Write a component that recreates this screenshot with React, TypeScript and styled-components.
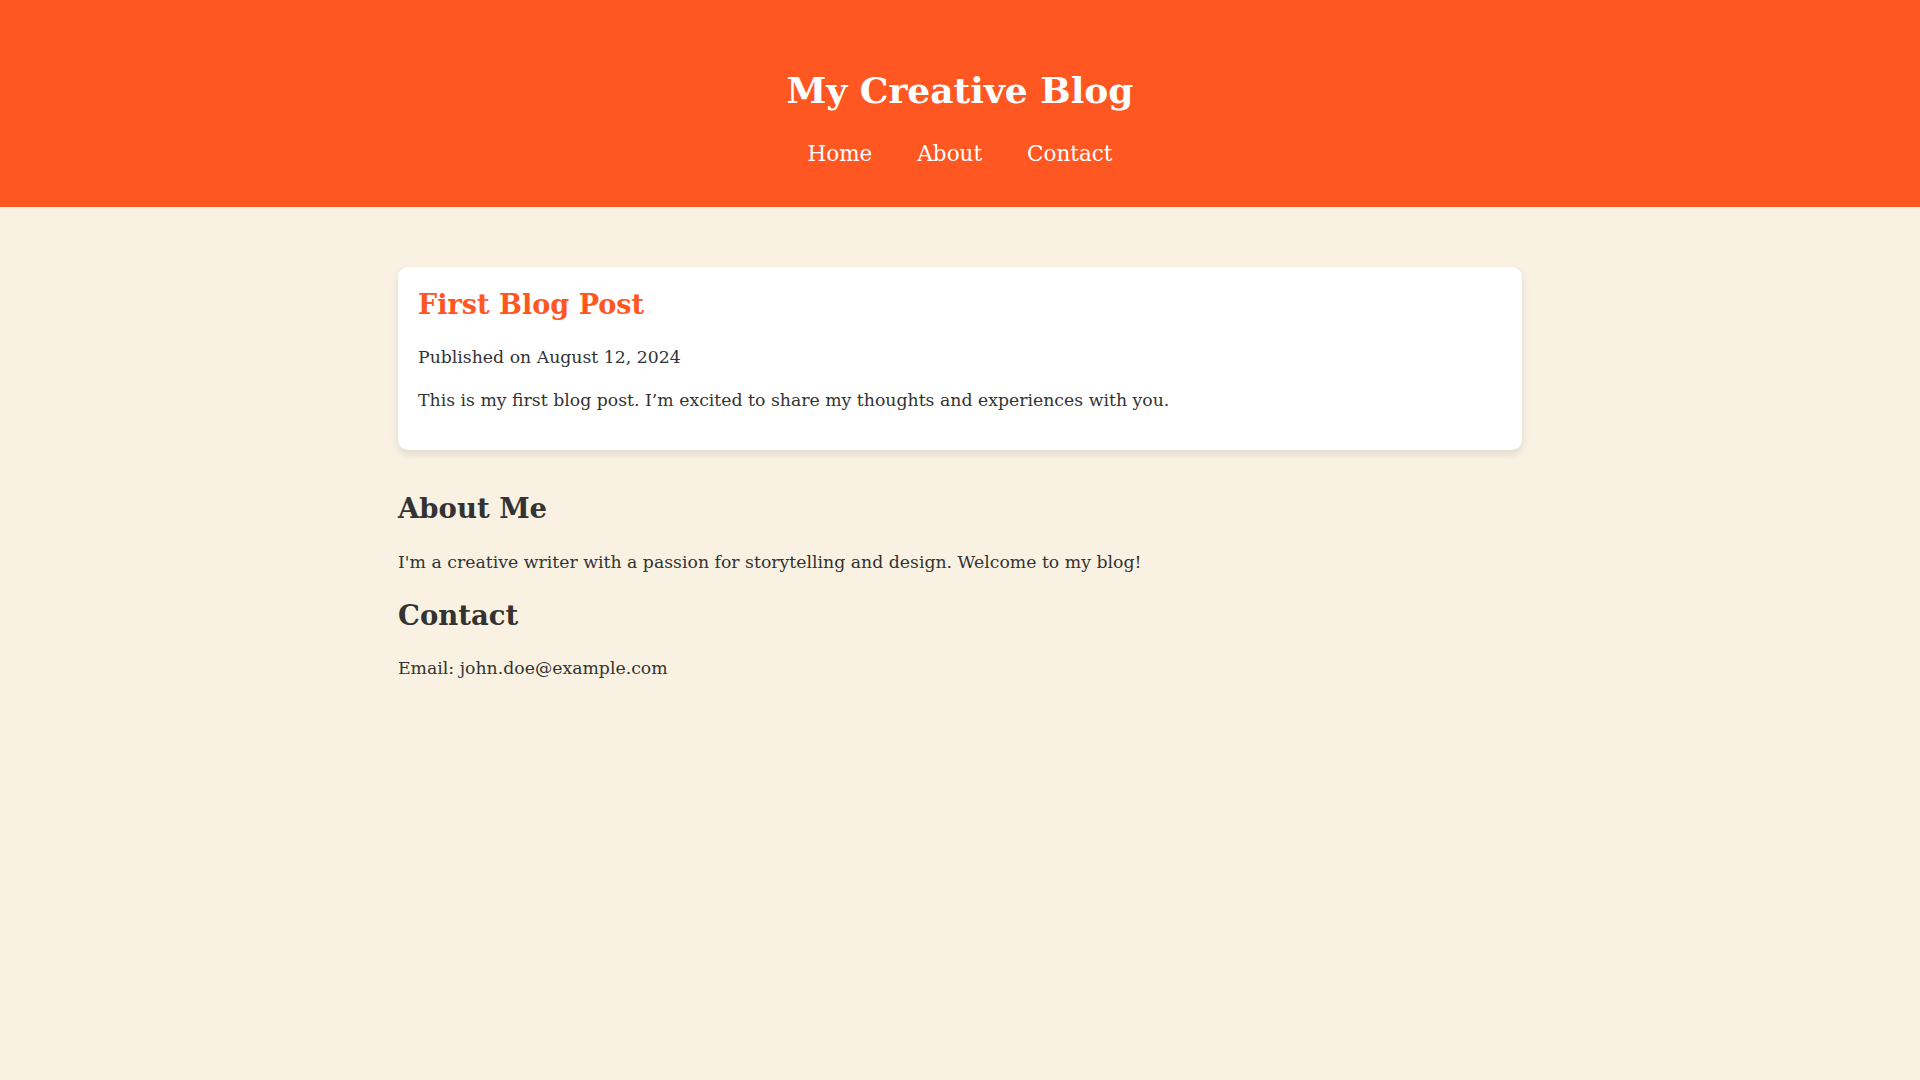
import React from "react";
import styled, { createGlobalStyle } from "styled-components";

const GlobalStyle = createGlobalStyle`
  html, body {
    margin: 0;
    padding: 0;
    background: #f9f2e2;
  }
  body {
    font-family: "DejaVu Serif", Georgia, serif;
    color: #333333;
  }
`;

const Page = styled.div`
  min-height: 1080px;
  background: #f9f2e2;
`;

const Header = styled.header`
  background: #ff5722;
  color: #ffffff;
  text-align: center;
  padding: 68px 20px 38px;
`;

const SiteTitle = styled.h1`
  margin: 0;
  font-size: 36px;
  line-height: 44px;
  font-weight: bold;
`;

const Nav = styled.nav`
  margin-top: 27px;
  display: flex;
  justify-content: center;
  gap: 45px;
`;

const NavLink = styled.a`
  color: #ffffff;
  text-decoration: none;
  font-size: 21.5px;
  line-height: 30px;
`;

const Main = styled.main`
  max-width: 1124px;
  margin: 0 auto;
  padding-top: 60px;
`;

const Card = styled.article`
  background: #ffffff;
  border-radius: 10px;
  box-shadow: 0 4px 8px rgba(0, 0, 0, 0.1);
  padding: 21px 20px 36px;
`;

const PostTitle = styled.h2`
  margin: 0;
  color: #ff5722;
  font-size: 27.1px;
  line-height: 34px;
  font-weight: bold;
`;

const Text = styled.p<{ $gap: number }>`
  margin: ${(p) => p.$gap}px 0 0;
  font-size: 17.3px;
  line-height: 28px;
`;

const SectionTitle = styled.h2<{ $gap: number }>`
  margin: ${(p) => p.$gap}px 0 0;
  font-size: 27.5px;
  line-height: 34px;
  font-weight: bold;
  color: #333333;
`;

export default function App() {
  return (
    <Page>
      <GlobalStyle />
      <Header>
        <SiteTitle>My Creative Blog</SiteTitle>
        <Nav>
          <NavLink href="#home">Home</NavLink>
          <NavLink href="#about">About</NavLink>
          <NavLink href="#contact">Contact</NavLink>
        </Nav>
      </Header>
      <Main>
        <Card>
          <PostTitle>First Blog Post</PostTitle>
          <Text $gap={21}>Published on August 12, 2024</Text>
          <Text $gap={15}>
            This is my first blog post. I’m excited to share my thoughts and experiences with you.
          </Text>
        </Card>
        <SectionTitle $gap={41} id="about">About Me</SectionTitle>
        <Text $gap={23}>
          I'm a creative writer with a passion for storytelling and design. Welcome to my blog!
        </Text>
        <SectionTitle $gap={22} id="contact">Contact</SectionTitle>
        <Text $gap={22}>Email: john.doe@example.com</Text>
      </Main>
    </Page>
  );
}
